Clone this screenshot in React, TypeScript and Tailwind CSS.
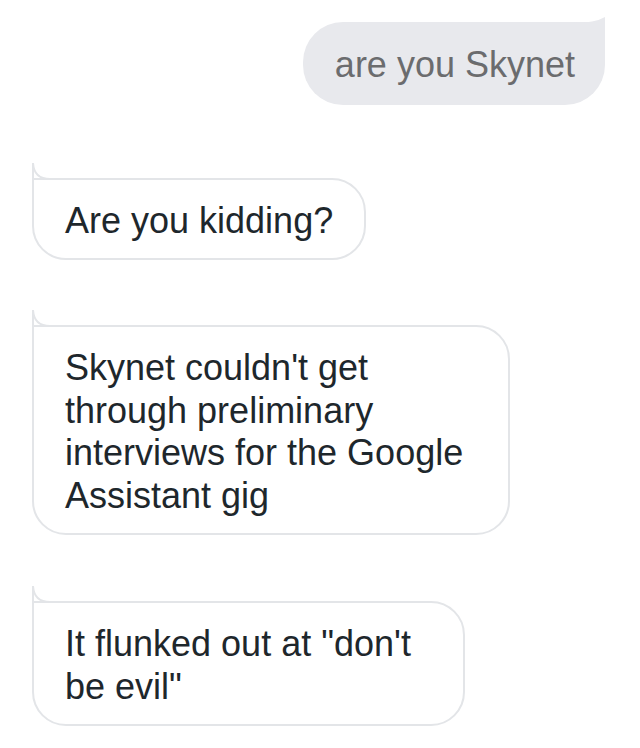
import React from 'react';

const font = { fontFamily: '"Liberation Sans", Arial, sans-serif' };

const BotTail: React.FC = () => (
  <svg
    className="absolute left-[-2px] top-[-18px]"
    width="24"
    height="20"
    viewBox="0 0 24 20"
    fill="none"
  >
    <path d="M1 1 V20" stroke="#e3e5e8" strokeWidth="2" />
    <path d="M1 1 Q2 17 18 17 H24" stroke="#e3e5e8" strokeWidth="2" />
  </svg>
);

const UserTail: React.FC = () => (
  <svg
    className="absolute right-0 top-[-5px]"
    width="32"
    height="6"
    viewBox="0 0 32 6"
  >
    <path d="M0 6 Q22 6 32 0 V6 Z" fill="#e8e9ed" />
  </svg>
);

const BotBubble: React.FC<{ text: string; className?: string }> = ({ text, className }) => (
  <div
    className={`relative self-start rounded-[34px] rounded-tl-none border-2 border-[#e3e5e8] bg-white pl-[31px] pr-[31px] pt-[20px] pb-[16px] text-[36px] leading-[42.5px] text-[#1e272c] ${className ?? ''}`}
  >
    <BotTail />
    {text}
  </div>
);

const App: React.FC = () => {
  return (
    <div className="min-h-[748px] w-[640px] bg-white" style={font}>
      <div className="flex flex-col px-[32px] pt-[22px]">
        <div className="relative mr-[3px] self-end rounded-[40px] rounded-tr-none bg-[#e8e9ed] pl-[32px] pr-[30px] pt-[22px] pb-[18px] text-[36px] leading-[42.5px] text-[#6b6c6e]">
          <UserTail />
          are you Skynet
        </div>

        <BotBubble text="Are you kidding?" className="mt-[73px]" />
        <BotBubble
          text="Skynet couldn't get through preliminary interviews for the Google Assistant gig"
          className="mt-[65px] w-[478px]"
        />
        <BotBubble text={'It flunked out at "don\'t be evil"'} className="mt-[66px] w-[433px]" />
      </div>
    </div>
  );
};

export default App;
